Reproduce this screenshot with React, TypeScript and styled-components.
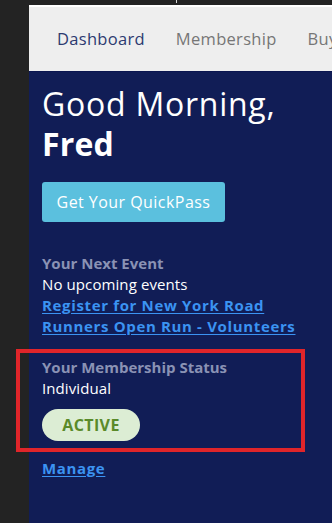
import React from "react";
import styled, { createGlobalStyle } from "styled-components";

const GlobalStyle = createGlobalStyle`
  html, body {
    margin: 0;
    padding: 0;
    background: #232323;
  }
  body {
    font-family: "Open Sans", "Liberation Sans", sans-serif;
    -webkit-font-smoothing: antialiased;
  }
`;

const Screen = styled.div`
  display: grid;
  grid-template-columns: 29px 1fr;
  grid-template-rows: 5px 1fr;
  height: 523px;
  overflow: hidden;
  background: #232323;
`;

const TopStrip = styled.div`
  grid-column: 1 / 3;
  position: relative;
`;

const Tick = styled.span`
  position: absolute;
  left: 176px;
  top: 0;
  width: 1px;
  height: 3px;
  background: #d8d8d8;
`;

const Panel = styled.div`
  grid-column: 2;
  display: flex;
  flex-direction: column;
  background: #111d56;
  border-top: 2px solid #ffffff;
`;

const TabBar = styled.nav`
  display: flex;
  align-items: center;
  gap: 31px;
  height: 65px;
  padding-left: 28px;
  background: #eeeeee;
  white-space: nowrap;
  overflow: hidden;
  border-bottom: 1px solid #0b1650;
  box-sizing: border-box;
`;

const Tab = styled.span<{ $active?: boolean }>`
  font-size: 16.5px;
  letter-spacing: 0.3px;
  color: ${(p) => (p.$active ? "#2c3a70" : "#767676")};
  padding-bottom: 2px;
`;

const Main = styled.main`
  display: flex;
  flex-direction: column;
  align-items: flex-start;
  padding: 12px 13px 0;
  color: #ffffff;
`;

const Greeting = styled.h1`
  margin: 0;
  font-size: 32px;
  line-height: 40px;
  font-weight: 400;
  letter-spacing: 0.75px;
`;

const Name = styled.strong`
  display: block;
  font-weight: 700;
  letter-spacing: 0.2px;
`;

const PassButton = styled.button`
  margin-top: 18px;
  height: 40px;
  width: 183px;
  border: none;
  border-radius: 3px;
  background: #5bc0de;
  color: #ffffff;
  font-family: inherit;
  font-size: 16px;
  letter-spacing: 0.45px;
  padding: 0;
`;

const Section = styled.section<{ $gap: number }>`
  position: relative;
  margin-top: ${(p) => p.$gap}px;
  display: flex;
  flex-direction: column;
  align-items: flex-start;
`;

const Label = styled.div`
  font-size: 15px;
  line-height: 21px;
  font-weight: 700;
  color: #8a92b4;
  letter-spacing: 0;
`;

const Value = styled.div`
  font-size: 15px;
  line-height: 21px;
  color: #ffffff;
  letter-spacing: 0.1px;
`;

const Link = styled.a`
  font-size: 15px;
  line-height: 21px;
  font-weight: 700;
  color: #3b93f2;
  text-decoration: underline;
  text-underline-offset: 2px;
  letter-spacing: 0.65px;
  cursor: pointer;
`;

const Pill = styled.span`
  margin-top: 10px;
  display: inline-flex;
  align-items: center;
  justify-content: center;
  width: 98px;
  height: 32px;
  border-radius: 16px;
  background: #dcedd4;
  color: #5a8a29;
  font-size: 16px;
  font-weight: 700;
  letter-spacing: 0.4px;
`;

const Highlight = styled.div`
  position: absolute;
  left: -26px;
  top: -8px;
  width: 289px;
  height: 103px;
  box-sizing: border-box;
  border: 4px solid #e0252a;
  pointer-events: none;
`;

export default function App() {
  return (
    <>
      <GlobalStyle />
      <Screen>
        <TopStrip>
          <Tick />
        </TopStrip>
        <Panel>
          <TabBar>
            <Tab $active>Dashboard</Tab>
            <Tab>Membership</Tab>
            <Tab>Buy</Tab>
          </TabBar>
          <Main>
            <Greeting>
              Good Morning,
              <Name>Fred</Name>
            </Greeting>
            <PassButton>Get Your QuickPass</PassButton>
            <Section $gap={31}>
              <Label>Your Next Event</Label>
              <Value>No upcoming events</Value>
              <Link>Register for New York Road</Link>
              <Link>Runners Open Run - Volunteers</Link>
            </Section>
            <Section $gap={20}>
              <Label>Your Membership Status</Label>
              <Value>Individual</Value>
              <Pill>ACTIVE</Pill>
              <Highlight />
            </Section>
            <Section $gap={17}>
              <Link>Manage</Link>
            </Section>
          </Main>
        </Panel>
      </Screen>
    </>
  );
}
